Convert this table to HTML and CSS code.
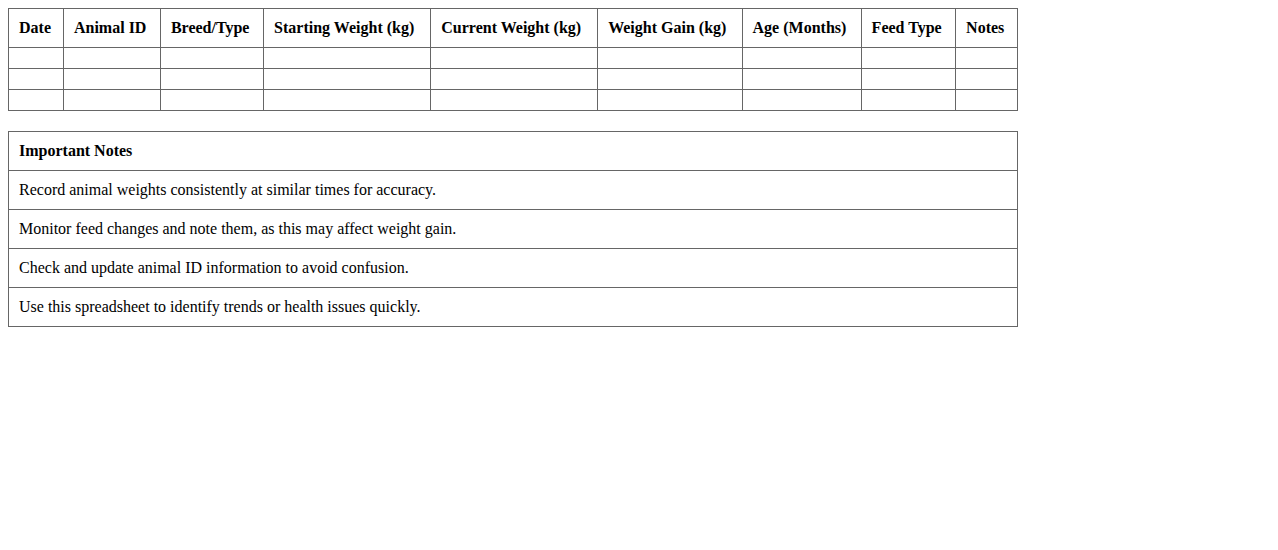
FILE: index.html
```html
<!DOCTYPE html>
<html>
<head>
<meta charset="utf-8">
<link rel="stylesheet" href="styles.css">
</head>
<body>
<table class="grid">
  <thead>
    <tr>
      <th>Date</th>
      <th>Animal ID</th>
      <th>Breed/Type</th>
      <th>Starting Weight (kg)</th>
      <th>Current Weight (kg)</th>
      <th>Weight Gain (kg)</th>
      <th>Age (Months)</th>
      <th>Feed Type</th>
      <th>Notes</th>
    </tr>
  </thead>
  <tbody>
    <tr><td></td><td></td><td></td><td></td><td></td><td></td><td></td><td></td><td></td></tr>
    <tr><td></td><td></td><td></td><td></td><td></td><td></td><td></td><td></td><td></td></tr>
    <tr><td></td><td></td><td></td><td></td><td></td><td></td><td></td><td></td><td></td></tr>
  </tbody>
</table>
<table class="grid notes">
  <tr><th>Important Notes</th></tr>
  <tr><td>Record animal weights consistently at similar times for accuracy.</td></tr>
  <tr><td>Monitor feed changes and note them, as this may affect weight gain.</td></tr>
  <tr><td>Check and update animal ID information to avoid confusion.</td></tr>
  <tr><td>Use this spreadsheet to identify trends or health issues quickly.</td></tr>
</table>
</body>
</html>
```
FILE: styles.css
```css
body {
  margin: 8px;
  font-family: "Liberation Serif", "Times New Roman", serif;
  font-size: 16px;
  color: #000;
  background: #fff;
}
.grid {
  width: 80%;
  border-collapse: collapse;
  margin-bottom: 20px;
}
.grid th, .grid td {
  border: 1px solid #666;
  padding: 10px;
  text-align: left;
}
.grid th {
  font-weight: bold;
}
```
